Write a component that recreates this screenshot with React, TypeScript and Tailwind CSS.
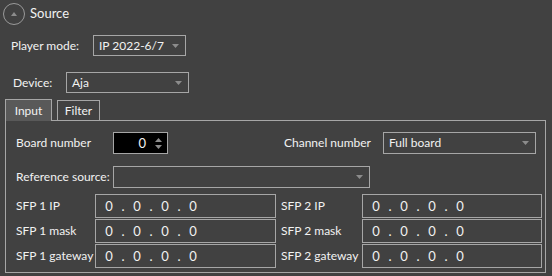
function Arrow({ className = "" }: { className?: string }) {
  return (
    <svg width="7" height="4" viewBox="0 0 7 4" className={className}>
      <path d="M0 0h7L3.5 4z" fill="#8c8c8c" />
    </svg>
  );
}

function Dropdown({ value, className }: { value?: string; className: string }) {
  return (
    <div
      className={`flex items-center justify-between border border-[#a6a6a6] pl-[5px] pr-[6px] ${className}`}
    >
      <span className="leading-none">{value}</span>
      <Arrow />
    </div>
  );
}

function IpBox({ className }: { className: string }) {
  const cells = ["0", ".", "0", ".", "0", ".", "0"];
  return (
    <div className={`flex h-[24px] items-center border border-[#a6a6a6] pl-[6px] ${className}`}>
      {cells.map((c, i) => (
        <span key={i} className="w-[14px] text-center text-[13px] leading-none">
          {c}
        </span>
      ))}
    </div>
  );
}

function SfpRow({ name }: { name: string }) {
  return (
    <div className="flex h-[24px] items-center">
      <span className="w-[79px]">SFP 1 {name}</span>
      <IpBox className="w-[181px]" />
      <span className="ml-[5px] w-[81px]">SFP 2 {name}</span>
      <IpBox className="w-[180px]" />
    </div>
  );
}

export default function App() {
  return (
    <div
      className="h-[276px] w-[552px] overflow-hidden whitespace-nowrap bg-[#414141] text-[12px] text-[#f2f2f2]"
      style={{ fontFamily: 'Lato, "Noto Sans", sans-serif' }}
    >
      {/* Header */}
      <div className="flex h-[26px] items-center pl-[3px] pt-[1px]">
        <div className="flex h-[22px] w-[22px] items-center justify-center rounded-full border border-[#9a9a9a]">
          <svg width="6" height="4" viewBox="0 0 6 4">
            <path d="M0 4h6L3 0z" fill="#8c8c8c" />
          </svg>
        </div>
        <span className="ml-[5px] text-[13px]">Source</span>
      </div>

      {/* Player mode */}
      <div className="mt-[9px] flex h-[21px] items-center">
        <span className="w-[93px] pl-[11px]">Player mode:</span>
        <Dropdown value="IP 2022-6/7" className="h-[21px] w-[93px]" />
      </div>

      {/* Device */}
      <div className="mt-[16px] flex h-[21px] items-center">
        <span className="w-[66px] pl-[13px]">Device:</span>
        <Dropdown value="Aja" className="h-[21px] w-[123px]" />
      </div>

      {/* Tabs */}
      <div className="mt-[6px] flex h-[21px] items-start pl-[5px]">
        <div className="relative z-10 flex h-[22px] w-[47px] items-center justify-center border border-b-0 border-[#a6a6a6] bg-[#595959]">
          Input
        </div>
        <div className="ml-[5px] mt-[1px] flex h-[20px] w-[43px] items-center justify-center border border-b-0 border-[#a6a6a6]">
          Filter
        </div>
      </div>

      {/* Panel */}
      <div className="ml-[5px] h-[153px] w-[541px] border border-[#a6a6a6] pl-[10px] pt-[11px]">
        <div className="flex h-[22px] items-center">
          <span className="w-[97px]">Board number</span>
          <div className="flex h-[22px] w-[55px] items-center justify-end border border-[#a6a6a6] bg-black pr-[5px]">
            <span className="mr-[9px] text-[13px] leading-none">0</span>
            <div className="flex flex-col gap-[3px]">
              <svg width="7" height="4" viewBox="0 0 7 4">
                <path d="M0 4h7L3.5 0z" fill="#8c8c8c" />
              </svg>
              <svg width="7" height="4" viewBox="0 0 7 4">
                <path d="M0 0h7L3.5 4z" fill="#8c8c8c" />
              </svg>
            </div>
          </div>
          <span className="ml-[116px] w-[99px]">Channel number</span>
          <Dropdown value="Full board" className="h-[22px] w-[153px]" />
        </div>

        <div className="mt-[12px] flex h-[22px] items-center">
          <span className="w-[97px]">Reference source:</span>
          <Dropdown className="h-[22px] w-[257px]" />
        </div>

        <div className="mt-[6px] flex flex-col gap-[1px]">
          <SfpRow name="IP" />
          <SfpRow name="mask" />
          <SfpRow name="gateway" />
        </div>
      </div>
    </div>
  );
}
